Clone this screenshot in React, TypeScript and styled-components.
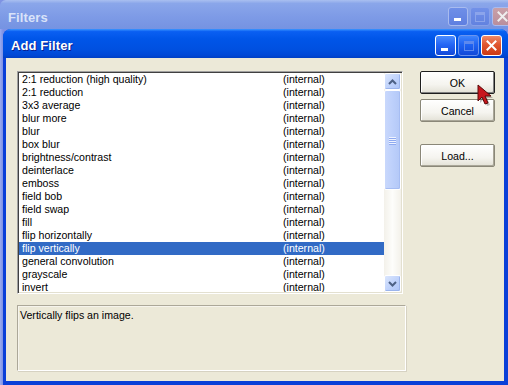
import React from "react";
import styled, { createGlobalStyle, css } from "styled-components";

const Global = createGlobalStyle`
  html, body { margin: 0; padding: 0; overflow: hidden; background: #7f93e3; }
  * { box-sizing: border-box; }
`;

const Screen = styled.div`
  position: relative;
  width: 508px;
  height: 385px;
  overflow: hidden;
  display: flex;
  flex-direction: column;
  background: #7f93e3;
  font-family: "Liberation Sans", Arial, sans-serif;
`;

const BackTitle = styled.div`
  height: 29px;
  flex: none;
  display: flex;
  align-items: flex-start;
  justify-content: space-between;
  padding-left: 8px;
  background: linear-gradient(180deg, #a9bff0 0%, #8aa6ea 12%, #7d9ae6 60%, #7593e2 100%);
  border-radius: 6px 0 0 0;
`;

const TitleText = styled.span<{ $inactive?: boolean }>`
  font-weight: bold;
  font-size: 13px;
  line-height: 13px;
  margin-top: ${(p) => (p.$inactive ? "11px" : "10px")};
  color: ${(p) => (p.$inactive ? "#d9e3f9" : "#ffffff")};
  text-shadow: ${(p) => (p.$inactive ? "none" : "1px 1px 0 #0a1f8f")};
  letter-spacing: 0.1px;
`;

const ButtonGroup = styled.div<{ $inactive?: boolean }>`
  display: flex;
  gap: 2px;
  margin-top: ${(p) => (p.$inactive ? "7px" : "6px")};
  margin-right: ${(p) => (p.$inactive ? "-4px" : "6px")};
`;

type Kind = "min" | "max" | "close";

const CapButton = styled.div<{ $kind: Kind; $inactive?: boolean }>`
  width: ${(p) => (p.$inactive ? "20px" : "21px")};
  height: ${(p) => (p.$inactive ? "19px" : "21px")};
  border-radius: 3px;
  display: flex;
  align-items: center;
  justify-content: center;
  position: relative;
  border: 1px solid ${(p) => (p.$inactive ? "#a8bbef" : "#ffffff")};
  ${(p) =>
    p.$kind === "close"
      ? css`
          background: ${p.$inactive
            ? "linear-gradient(180deg, #c9a0a8, #b98e9c)"
            : "linear-gradient(180deg, #f08a6a 0%, #e0562f 45%, #cc3a14 100%)"};
        `
      : css`
          background: ${p.$inactive
            ? "linear-gradient(180deg, #6f8fe8, #5f7fe0)"
            : "linear-gradient(180deg, #4a8cff 0%, #2566f5 45%, #1449d8 100%)"};
        `}
  ${(p) =>
    p.$kind === "max" &&
    css`
      border-color: ${p.$inactive ? "#8aa2ea" : "#7d9ff0"};
      opacity: 0.85;
    `}
`;

const MinGlyph = styled.div`
  position: absolute;
  left: 5px;
  bottom: 4px;
  width: 7px;
  height: 3px;
  background: #fff;
`;

const MaxGlyph = styled.div<{ $inactive?: boolean }>`
  width: 10px;
  height: 10px;
  border: 1px solid ${(p) => (p.$inactive ? "#8ea6ec" : "#6e93f0")};
  border-top-width: 3px;
`;

function TitleButtons({ inactive }: { inactive?: boolean }) {
  return (
    <ButtonGroup $inactive={inactive}>
      <CapButton $kind="min" $inactive={inactive}>
        <MinGlyph />
      </CapButton>
      <CapButton $kind="max" $inactive={inactive}>
        <MaxGlyph $inactive={inactive} />
      </CapButton>
      <CapButton $kind="close" $inactive={inactive}>
        <svg width="11" height="11" viewBox="0 0 11 11">
          <path d="M1.5 1.5 L9.5 9.5 M9.5 1.5 L1.5 9.5" stroke={inactive ? "#eee" : "#fff"} strokeWidth="2" strokeLinecap="square" />
        </svg>
      </CapButton>
    </ButtonGroup>
  );
}

const BackBody = styled.div`
  flex: 1;
  display: flex;
  padding-left: 3px;
  background: linear-gradient(90deg, #9aabf0 0, #7d90e4 3px);
`;

const Dialog = styled.div`
  width: 505px;
  display: flex;
  flex-direction: column;
  background: #0a3fd8;
  border-radius: 8px 8px 0 0;
  overflow: hidden;
`;

const DialogTitle = styled.div`
  height: 29px;
  flex: none;
  display: flex;
  align-items: flex-start;
  justify-content: space-between;
  padding-left: 8px;
  background: linear-gradient(
    180deg,
    #3d95ff 0%,
    #0a5ff2 9%,
    #0055e8 35%,
    #0050e0 70%,
    #0048d6 90%,
    #003fc4 100%
  );
`;

const DialogBody = styled.div`
  flex: 1;
  margin: 0 4px 4px 3px;
  background: #ece9d8;
  display: flex;
  gap: 14px;
  padding: 13px 0 0 11px;
`;

const LeftColumn = styled.div`
  width: 389px;
  display: flex;
  flex-direction: column;
  gap: 11px;
`;

const ListBox = styled.div`
  width: 386px;
  height: 223px;
  display: flex;
  background: #fff;
  border-top: 1px solid #a0a0a0;
  border-left: 1px solid #a0a0a0;
  border-right: 1px solid #ffffff;
  border-bottom: 1px solid #ffffff;
  box-shadow: inset 1px 1px 0 #404040, inset -1px -1px 0 #e3e0d0;
  padding: 1px;
`;

const Rows = styled.div`
  flex: 1;
  overflow: hidden;
`;

const Row = styled.div<{ $selected?: boolean }>`
  height: 13px;
  display: grid;
  grid-template-columns: 261px 1fr;
  padding-left: 3px;
  font-size: 10.6px;
  line-height: 13px;
  white-space: nowrap;
  color: ${(p) => (p.$selected ? "#ffffff" : "#000000")};
  background: ${(p) => (p.$selected ? "#316ac5" : "transparent")};
`;

const Scrollbar = styled.div`
  width: 17px;
  display: flex;
  flex-direction: column;
  background: linear-gradient(90deg, #f3f1ea 0%, #fdfdfb 50%, #f3f1ea 100%);
`;

const ScrollBtn = styled.div`
  height: 17px;
  flex: none;
  border: 1px solid #ffffff;
  border-radius: 2px;
  background: linear-gradient(135deg, #dbe6fd 0%, #bcd0fb 60%, #aec5f7 100%);
  box-shadow: inset -1px -1px 0 #9bb4ec;
  display: flex;
  align-items: center;
  justify-content: center;
`;

const Track = styled.div`
  flex: 1;
  display: flex;
  flex-direction: column;
`;

const Thumb = styled.div`
  height: 100px;
  border: 1px solid #ffffff;
  border-radius: 2px;
  background: linear-gradient(90deg, #c9d8fc 0%, #bdd0fb 50%, #b3c8f7 100%);
  box-shadow: inset -1px -1px 0 #a6bdf3;
  display: flex;
  flex-direction: column;
  align-items: center;
  justify-content: center;
  gap: 1px;
`;

const Grip = styled.div`
  width: 7px;
  height: 1px;
  background: #eef3ff;
  box-shadow: 0 1px 0 #8faaf0;
`;

const Chevron = ({ up }: { up?: boolean }) => (
  <svg width="9" height="6" viewBox="0 0 9 6">
    <path
      d={up ? "M1 5 L4.5 1.5 L8 5" : "M1 1 L4.5 4.5 L8 1"}
      stroke="#4d6185"
      strokeWidth="2"
      fill="none"
    />
  </svg>
);

const Description = styled.div`
  width: 389px;
  height: 66px;
  border-top: 1px solid #aca899;
  border-left: 1px solid #aca899;
  border-right: 1px solid #ffffff;
  border-bottom: 1px solid #ffffff;
  box-shadow: inset 1px 1px 0 #f6f4ec, 1px 1px 0 #d6d2c2;
  padding: 3px 0 0 2px;
  font-size: 10.6px;
  line-height: 13px;
  color: #000;
`;

const RightColumn = styled.div`
  display: flex;
  flex-direction: column;
  gap: 5px;
`;

const PushButton = styled.div<{ $default?: boolean; $spaced?: boolean }>`
  width: 75px;
  height: 23px;
  margin-top: ${(p) => (p.$spaced ? "17px" : "0")};
  display: flex;
  align-items: center;
  justify-content: center;
  font-size: 10.6px;
  color: #000;
  background: linear-gradient(180deg, #ffffff 0%, #f5f4ef 60%, #e3e1d6 100%);
  border: 1px solid ${(p) => (p.$default ? "#1e1e1e" : "#8a8778")};
  border-radius: 2px;
  box-shadow: ${(p) =>
    p.$default
      ? "inset -1px -1px 0 #808080, inset 1px 1px 0 #ffffff"
      : "inset -1px -1px 0 #a9a698, inset 1px 1px 0 #ffffff"};
`;

const Cursor = styled.svg`
  position: absolute;
  left: 477px;
  top: 84px;
  pointer-events: none;
`;

const filters = [
  "2:1 reduction (high quality)",
  "2:1 reduction",
  "3x3 average",
  "blur more",
  "blur",
  "box blur",
  "brightness/contrast",
  "deinterlace",
  "emboss",
  "field bob",
  "field swap",
  "fill",
  "flip horizontally",
  "flip vertically",
  "general convolution",
  "grayscale",
  "invert",
];

export default function App() {
  return (
    <>
      <Global />
      <Screen>
        <BackTitle>
          <TitleText $inactive>Filters</TitleText>
          <TitleButtons inactive />
        </BackTitle>
        <BackBody>
          <Dialog>
            <DialogTitle>
              <TitleText>Add Filter</TitleText>
              <TitleButtons />
            </DialogTitle>
            <DialogBody>
              <LeftColumn>
                <ListBox>
                  <Rows>
                    {filters.map((f) => (
                      <Row key={f} $selected={f === "flip vertically"}>
                        <span>{f}</span>
                        <span>(internal)</span>
                      </Row>
                    ))}
                  </Rows>
                  <Scrollbar>
                    <ScrollBtn>
                      <Chevron up />
                    </ScrollBtn>
                    <Track>
                      <Thumb>
                        <Grip />
                        <Grip />
                        <Grip />
                        <Grip />
                      </Thumb>
                    </Track>
                    <ScrollBtn>
                      <Chevron />
                    </ScrollBtn>
                  </Scrollbar>
                </ListBox>
                <Description>Vertically flips an image.</Description>
              </LeftColumn>
              <RightColumn>
                <PushButton $default>OK</PushButton>
                <PushButton>Cancel</PushButton>
                <PushButton $spaced>Load...</PushButton>
              </RightColumn>
            </DialogBody>
          </Dialog>
        </BackBody>
        <Cursor width="22" height="24" viewBox="0 0 22 24">
          <path d="M3 3 L3 19 L7 15 L10 22 L13 21 L10 14 L16 14 Z" fill="rgba(0,0,0,0.25)" />
          <path d="M1 1 L1 17 L5 13 L8 20 L11 19 L8 12 L14 12 Z" fill="#c8161d" stroke="#5a0a0a" strokeWidth="1" strokeLinejoin="round" />
        </Cursor>
      </Screen>
    </>
  );
}
